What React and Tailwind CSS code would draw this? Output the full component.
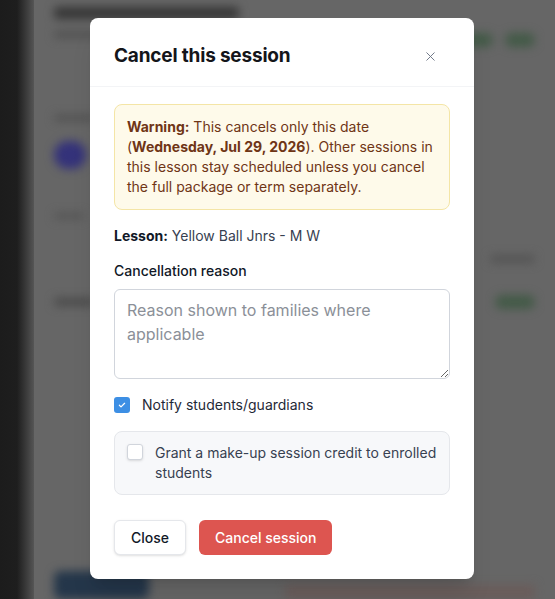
import React from "react";
import { X } from "lucide-react";

function Background() {
  return (
    <div className="flex h-full w-full bg-[#666666]">
      <div className="w-[34px] shrink-0 bg-gradient-to-r from-[#1c1c1c] via-[#1e1e1e] to-[#555555]" />
      <div className="flex flex-1 flex-col px-5 pt-[7px]">
        <div className="flex items-start justify-between blur-[5px]">
          <div className="flex flex-col gap-3">
            <div className="h-[12px] w-[185px] rounded bg-[#363636]" />
            <div className="h-[7px] w-[90px] rounded bg-[#505050]" />
          </div>
          <div className="mt-[26px] flex gap-3">
            <div className="h-[14px] w-[40px] rounded-full bg-[#435a47]" />
            <div className="h-[14px] w-[30px] rounded-full bg-[#435a47]" />
          </div>
        </div>
        <div className="mt-[68px] flex flex-col gap-5 blur-[5px]">
          <div className="h-[6px] w-[40px] rounded bg-[#505050]" />
          <div className="h-[28px] w-[32px] rounded-full bg-[#34327a]" />
          <div className="mt-6 flex items-center justify-between">
            <div className="h-[6px] w-[30px] rounded bg-[#545454]" />
          </div>
          <div className="mt-4 flex items-center justify-end">
            <div className="h-[8px] w-[45px] rounded bg-[#545454]" />
          </div>
          <div className="mt-3 flex items-center justify-between">
            <div className="h-[8px] w-[40px] rounded bg-[#4a4a4a]" />
            <div className="h-[14px] w-[40px] rounded-full bg-[#435a47]" />
          </div>
        </div>
        <div className="mt-auto flex items-end justify-between blur-[5px]">
          <div className="h-[28px] w-[95px] rounded-md bg-[#24364a]" />
          <div className="h-[14px] w-[250px] bg-[#6a5c5a]" />
        </div>
      </div>
    </div>
  );
}

function CheckedBox() {
  return (
    <span className="flex h-4 w-4 shrink-0 items-center justify-center rounded-[3px] bg-[#3d8fe4]">
      <svg viewBox="0 0 16 16" className="h-3 w-3" fill="none" stroke="white" strokeWidth="1.6" strokeLinecap="round" strokeLinejoin="round">
        <path d="M4.5 8.3l2.2 2.2 4.8-4.8" />
      </svg>
    </span>
  );
}

export default function App() {
  return (
    <div
      className="relative h-[599px] w-[555px] overflow-hidden"
      style={{ fontFamily: "Inter, 'Noto Sans', sans-serif" }}
    >
      <Background />
      <div className="absolute inset-0 flex items-start justify-start pl-[90px] pt-[18px]">
        <div className="flex w-[384px] flex-col rounded-lg bg-white shadow-xl">
          <div className="flex items-center justify-between border-b border-gray-100 px-6 pb-[16px] pt-[24px]">
            <h2
              className="text-[19px] font-bold leading-7 tracking-[-0.01em] text-[#14151a]"
              style={{ fontFamily: "Inter, 'Open Sans', sans-serif" }}
            >
              Cancel this session
            </h2>
            <X className="mr-[12px] h-[15px] w-[15px] text-gray-500" strokeWidth={1.5} />
          </div>
          <div className="flex flex-col px-6 pb-6 pt-[17px]">
            <div className="rounded-lg border border-[#f4e5a6] bg-[#fefaea] p-3 text-sm leading-5 text-[#6f3516]">
              <span className="font-bold">Warning:</span> This cancels only this date (
              <span className="font-bold">Wednesday, Jul 29, 2026</span>). Other sessions in this lesson stay
              scheduled unless you cancel the full package or term separately.
            </div>
            <div className="mt-4 text-sm leading-5 text-[#374151]">
              <span className="font-bold text-[#111827]">Lesson:</span> Yellow Ball Jnrs - M W
            </div>
            <label className="mt-[15px] text-sm font-medium leading-5 text-[#111827]">Cancellation reason</label>
            <textarea
              rows={3}
              placeholder="Reason shown to families where applicable"
              className="mt-2 w-full rounded-md border border-gray-300 px-3 py-2 text-base leading-6 text-gray-900 placeholder:text-[#8b9098]"
            />
            <div className="mt-4 flex items-center gap-3 text-sm leading-5 text-[#1f2937]">
              <CheckedBox />
              <span>Notify students/guardians</span>
            </div>
            <div className="mt-4 flex items-start gap-3 rounded-lg border border-gray-200 bg-[#f7f8fa] px-3 py-[11px] text-sm leading-5 text-[#374151]">
              <span className="mt-[1px] h-4 w-4 shrink-0 rounded-[3px] border border-gray-300 bg-white shadow-sm" />
              <span>Grant a make-up session credit to enrolled students</span>
            </div>
            <div className="mt-[25px] flex gap-[13px]">
              <button className="h-[35px] rounded-md border border-gray-200 bg-white px-4 text-sm font-medium text-[#111827] shadow-sm">
                Close
              </button>
              <button className="h-[35px] rounded-md bg-[#dd5550] px-4 text-sm font-medium text-white">
                Cancel session
              </button>
            </div>
          </div>
        </div>
      </div>
    </div>
  );
}
